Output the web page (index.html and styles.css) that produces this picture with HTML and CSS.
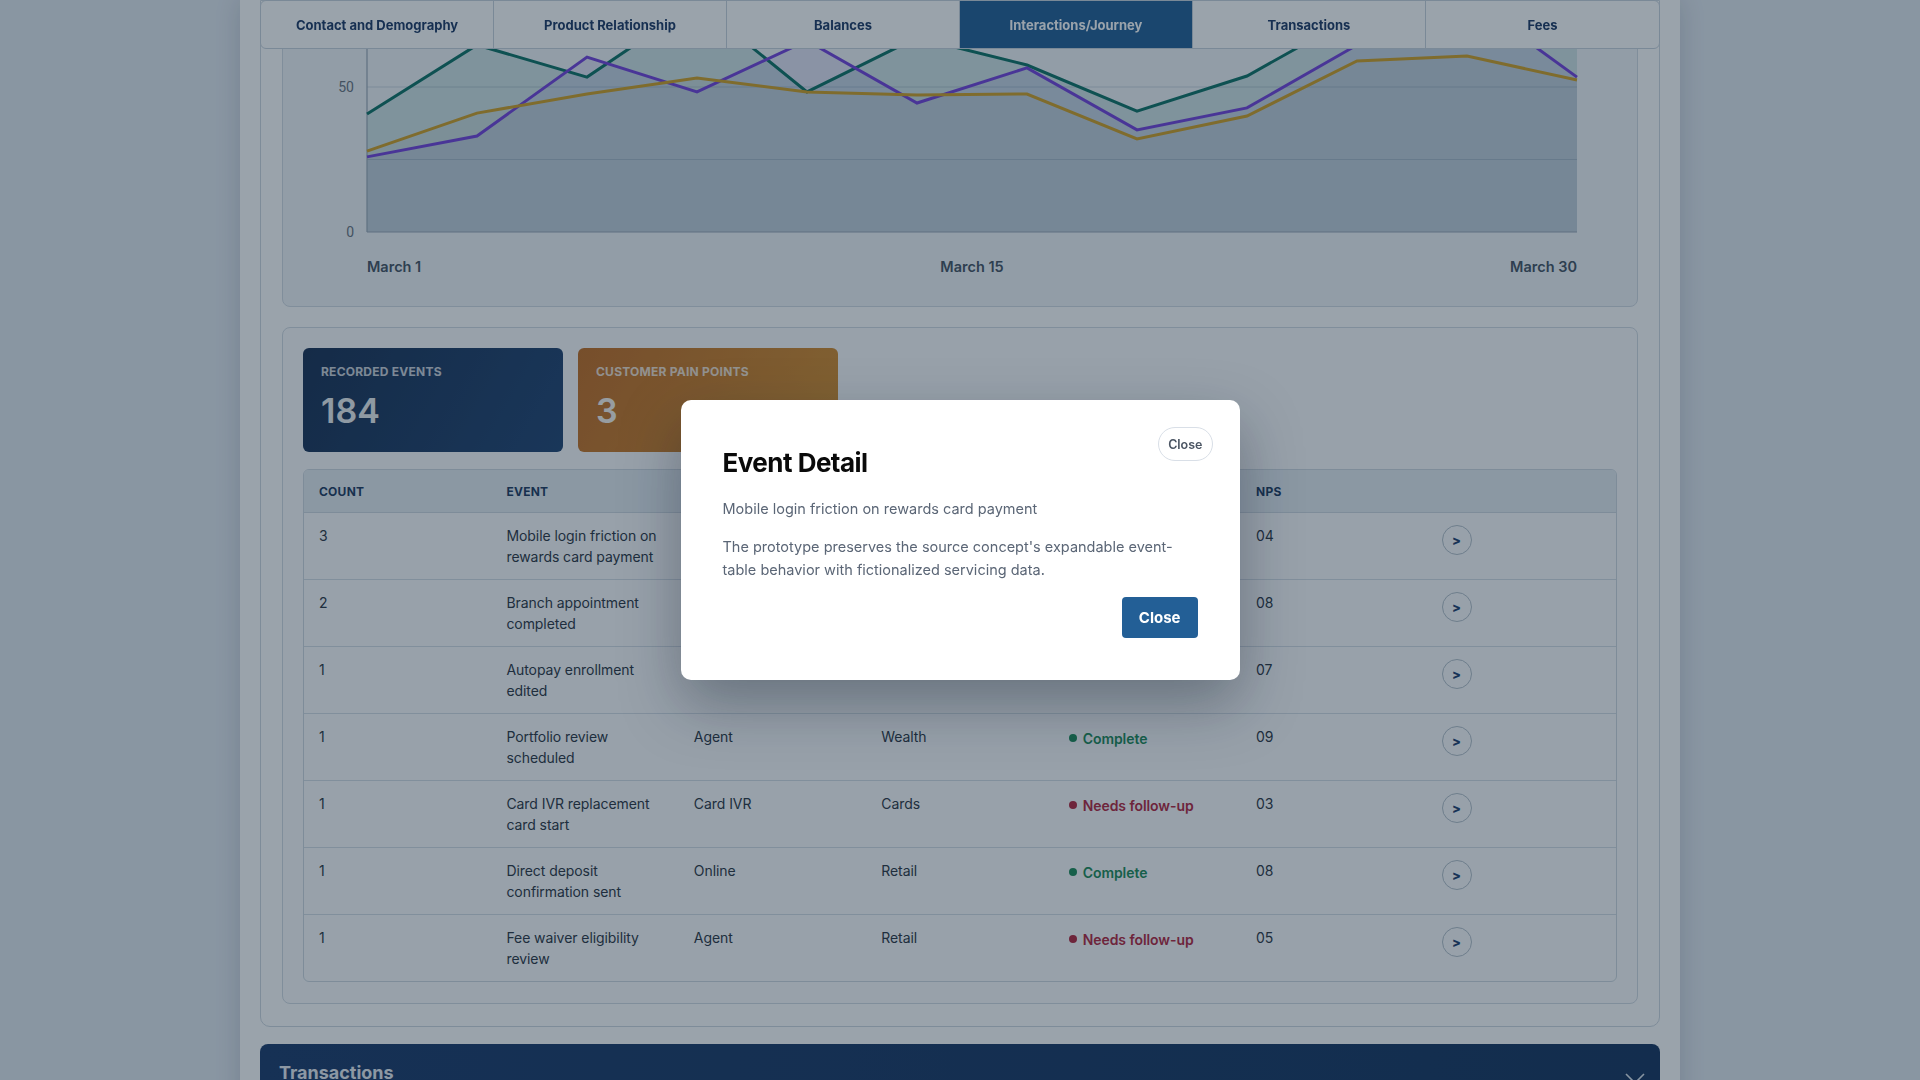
FILE: index.html
```html
<!DOCTYPE html>
<html lang="en">
<head>
<meta charset="utf-8">
<title>Customer Profile – Interactions/Journey</title>
<link rel="stylesheet" href="styles.css">
</head>
<body class="modal-open">
<main class="column">
  <nav class="tabs">
    <a class="tab">Contact and Demography</a>
    <a class="tab">Product Relationship</a>
    <a class="tab">Balances</a>
    <a class="tab tab-active">Interactions/Journey</a>
    <a class="tab">Transactions</a>
    <a class="tab">Fees</a>
  </nav>

  <section class="profile-card">
    <div class="chart-card">
      <svg class="chart" width="1353" height="282" viewBox="0 0 1353 282">
        <g class="grid">
          <line x1="84" y1="135.5" x2="1294" y2="135.5"/>
          <line x1="84" y1="63" x2="1294" y2="63"/>
          <line x1="84" y1="-9.5" x2="1294" y2="-9.5"/>
        </g>
        <polygon class="area-teal" points="84,90 194,21 304,53.1 414,-21.1 524,67.9 634,13.7 744,41 854,87.1 964,52 1074,-9.5 1184,-35.6 1294,-18.2 1294,208 84,208"/>
        <polygon class="area-purple" points="84,132.9 194,112 304,33.1 414,67.9 524,16.6 634,79 744,43.9 854,105.9 964,83.9 1074,21 1184,-26.9 1294,53.1 1294,208 84,208"/>
        <polygon class="area-gold" points="84,127.1 194,89.1 304,70 414,54 524,67.9 634,71.1 744,70 854,114.9 964,92 1074,36.9 1184,32 1294,56 1294,208 84,208"/>
        <line class="axis" x1="84" y1="0" x2="84" y2="208"/>
        <line class="axis" x1="84" y1="208" x2="1294" y2="208"/>
        <polyline class="line-teal" points="84,90 194,21 304,53.1 414,-21.1 524,67.9 634,13.7 744,41 854,87.1 964,52 1074,-9.5 1184,-35.6 1294,-18.2"/>
        <polyline class="line-purple" points="84,132.9 194,112 304,33.1 414,67.9 524,16.6 634,79 744,43.9 854,105.9 964,83.9 1074,21 1184,-26.9 1294,53.1"/>
        <polyline class="line-gold" points="84,127.1 194,89.1 304,70 414,54 524,67.9 634,71.1 744,70 854,114.9 964,92 1074,36.9 1184,32 1294,56"/>
        <text class="y-label" x="71" y="68">50</text>
        <text class="y-label" x="71" y="213">0</text>
        <text class="x-label" x="84" y="248">March 1</text>
        <text class="x-label x-mid" x="689" y="248">March 15</text>
        <text class="x-label x-end" x="1294" y="248">March 30</text>
      </svg>
    </div>

    <div class="events-card">
      <div class="stats">
        <div class="stat stat-navy">
          <div class="stat-label">Recorded Events</div>
          <div class="stat-value">184</div>
        </div>
        <div class="stat stat-amber">
          <div class="stat-label">Customer Pain Points</div>
          <div class="stat-value">3</div>
        </div>
      </div>

      <div class="table-wrap">
        <table class="events">
          <thead>
            <tr><th>Count</th><th>Event</th><th>Channel</th><th>Product</th><th>Status</th><th>NPS</th><th></th></tr>
          </thead>
          <tbody>
            <tr><td>3</td><td>Mobile login friction on rewards card payment</td><td>Mobile</td><td>Cards</td><td><span class="status status-bad">Needs follow-up</span></td><td>04</td><td class="action"><button class="expand">&gt;</button></td></tr>
            <tr><td>2</td><td>Branch appointment completed</td><td>Branch</td><td>Retail</td><td><span class="status status-ok">Complete</span></td><td>08</td><td class="action"><button class="expand">&gt;</button></td></tr>
            <tr><td>1</td><td>Autopay enrollment edited</td><td>Online</td><td>Cards</td><td><span class="status status-ok">Complete</span></td><td>07</td><td class="action"><button class="expand">&gt;</button></td></tr>
            <tr><td>1</td><td>Portfolio review scheduled</td><td>Agent</td><td>Wealth</td><td><span class="status status-ok">Complete</span></td><td>09</td><td class="action"><button class="expand">&gt;</button></td></tr>
            <tr><td>1</td><td>Card IVR replacement card start</td><td>Card IVR</td><td>Cards</td><td><span class="status status-bad">Needs follow-up</span></td><td>03</td><td class="action"><button class="expand">&gt;</button></td></tr>
            <tr><td>1</td><td>Direct deposit confirmation sent</td><td>Online</td><td>Retail</td><td><span class="status status-ok">Complete</span></td><td>08</td><td class="action"><button class="expand">&gt;</button></td></tr>
            <tr><td>1</td><td>Fee waiver eligibility review</td><td>Agent</td><td>Retail</td><td><span class="status status-bad">Needs follow-up</span></td><td>05</td><td class="action"><button class="expand">&gt;</button></td></tr>
          </tbody>
        </table>
      </div>
    </div>
  </section>

  <section class="collapse-bar">
    <h3 class="collapse-title">Transactions</h3>
    <svg class="chevron" width="20" height="12" viewBox="0 0 20 12"><polyline points="1,1 10,10 19,1"/></svg>
  </section>
</main>

<div class="overlay">
  <div class="modal" role="dialog">
    <button class="pill-close">Close</button>
    <h2 class="modal-title">Event Detail</h2>
    <p class="modal-sub">Mobile login friction on rewards card payment</p>
    <p class="modal-text">The prototype preserves the source concept's expandable event-table behavior with fictionalized servicing data.</p>
    <div class="modal-actions">
      <button class="btn-primary">Close</button>
    </div>
  </div>
</div>
</body>
</html>
```

FILE: styles.css
```css
* { box-sizing: border-box; }
html, body { margin: 0; height: 100%; }
body {
  background: #e2e8f0;
  font-family: Inter, "Noto Sans", sans-serif;
  color: #2b3442;
}
body.modal-open { overflow: hidden; }

.column {
  width: 1440px;
  min-height: 100vh;
  margin: 0 auto;
  padding: 0 20px;
  background: #ffffff;
  box-shadow: 0 0 24px rgba(15, 23, 42, 0.16);
}

/* sticky tab bar */
.tabs {
  position: fixed;
  top: 0;
  left: 50%;
  transform: translateX(-50%);
  width: 1400px;
  height: 49px;
  display: grid;
  grid-template-columns: repeat(6, 1fr);
  background: #ffffff;
  border: 1px solid #c9d3dd;
  border-radius: 6px;
  overflow: hidden;
  z-index: 5;
}
.tab {
  display: flex;
  align-items: center;
  justify-content: center;
  font-size: 13px;
  font-weight: 700;
  color: #1e3a66;
  border-right: 1px solid #c9d3dd;
}
.tab:last-child { border-right: none; }
.tab-active { background: #235f96; color: #ffffff; }

.profile-card {
  border: 1px solid #cfd8e1;
  border-radius: 0 0 10px 10px;
  padding: 22px 21px 22px;
  background: #ffffff;
}

.chart-card {
  border: 1px solid #d3dbe3;
  border-radius: 8px;
  background: #f1f5f9;
  overflow: hidden;
}
.chart { display: block; }
.grid line { stroke: #cdd6df; stroke-width: 1; }
.axis { stroke: #9aa8b6; stroke-width: 1.2; }
.area-teal { fill: #0f766e; fill-opacity: 0.14; }
.area-purple { fill: #5b3fd6; fill-opacity: 0.09; }
.area-gold { fill: #8a8f76; fill-opacity: 0.07; }
.line-teal, .line-purple, .line-gold { fill: none; stroke-width: 3; stroke-linejoin: miter; }
.line-teal { stroke: #0f7266; }
.line-purple { stroke: #7443dc; }
.line-gold { stroke: #d1a027; }
.y-label { font-family: Roboto, Inter, sans-serif; font-size: 14px; fill: #6b7480; text-anchor: end; }
.x-label { font-family: Inter, sans-serif; font-size: 14.5px; font-weight: 600; fill: #465363; }
.x-mid { text-anchor: middle; }
.x-end { text-anchor: end; }

.events-card {
  margin-top: 20px;
  border: 1px solid #d3dbe3;
  border-radius: 8px;
  background: #fbfcfd;
  padding: 20px 20px 21px;
}
.stats { display: flex; gap: 15px; }
.stat {
  width: 260px;
  height: 104px;
  border-radius: 6px;
  padding: 16px 18px;
  color: #ffffff;
}
.stat-navy { background: linear-gradient(120deg, #1a3154 0%, #224573 100%); }
.stat-amber { background: linear-gradient(120deg, #c26d24 0%, #d5902f 100%); }
.stat-label {
  font-size: 12px;
  line-height: 16px;
  font-weight: 700;
  text-transform: uppercase;
  letter-spacing: 0.02em;
  opacity: 0.78;
}
.stat-value {
  margin-top: 11px;
  font-size: 34px;
  line-height: 40px;
  font-weight: 600;
  opacity: 0.92;
}

.table-wrap {
  margin-top: 17px;
  border: 1px solid #cfd8e1;
  border-radius: 6px;
  overflow: hidden;
}
.events {
  width: 100%;
  table-layout: fixed;
  border-collapse: separate;
  border-spacing: 0;
  font-size: 14px;
}
.events th {
  height: 43px;
  padding: 0 15px;
  text-align: left;
  font-size: 12px;
  font-weight: 700;
  letter-spacing: 0.02em;
  text-transform: uppercase;
  color: #1e3a5f;
  background: #e5ecf2;
  border-bottom: 1px solid #cfd8e1;
}
.events td {
  padding: 12px 15px;
  line-height: 21px;
  vertical-align: top;
  color: #2d3644;
  letter-spacing: -0.005em;
  border-bottom: 1px solid #d5dde6;
}
.events td.action { padding-left: 13px; }
.events tbody tr:last-child td { border-bottom: none; }

.status { display: inline-flex; align-items: center; gap: 6px; font-weight: 600; }
.status::before {
  content: "";
  width: 8px;
  height: 8px;
  border-radius: 50%;
  background: currentColor;
}
.status-ok { color: #1d8a58; }
.status-bad { color: #b3263f; }

.expand {
  width: 30px;
  height: 30px;
  border-radius: 50%;
  border: 1px solid #b4bfca;
  background: transparent;
  color: #1e3f6e;
  font-family: Inter, sans-serif;
  font-size: 13px;
  font-weight: 800;
  line-height: 1;
  padding: 0;
}

.collapse-bar {
  margin-top: 17px;
  height: 90px;
  border-radius: 8px 8px 0 0;
  background: linear-gradient(90deg, #1c3b6b 0%, #17355f 100%);
  display: flex;
  align-items: flex-start;
  justify-content: space-between;
  padding: 18px 15px 0 19px;
}
.collapse-title {
  margin: 0;
  font-size: 18px;
  line-height: 22px;
  font-weight: 700;
  color: #e8edf3;
}
.chevron { margin-top: 11px; }
.chevron polyline { fill: none; stroke: #dfe6ee; stroke-width: 1.6; }

/* modal */
.overlay {
  position: fixed;
  inset: 0;
  background: rgba(15, 35, 55, 0.42);
  display: flex;
  align-items: center;
  justify-content: center;
  z-index: 10;
}
.modal {
  position: relative;
  width: 559px;
  background: #ffffff;
  border-radius: 10px;
  padding: 47px 42px 42px;
  box-shadow: 0 24px 60px rgba(15, 23, 42, 0.35);
}
.pill-close {
  position: absolute;
  top: 27px;
  right: 27px;
  height: 34px;
  padding: 0 9px;
  border: 1px solid #d9dfe7;
  border-radius: 999px;
  background: #ffffff;
  font-family: Inter, sans-serif;
  font-size: 12.5px;
  font-weight: 600;
  color: #4b5563;
}
.modal-title {
  margin: 0;
  font-size: 26px;
  line-height: 32px;
  font-weight: 700;
  letter-spacing: -0.02em;
  color: #0a0a0a;
}
.modal-sub {
  margin: 19px 0 0;
  font-size: 14.5px;
  line-height: 22px;
  color: #5b6676;
}
.modal-text {
  margin: 15px 0 0;
  font-size: 14.5px;
  line-height: 23px;
  color: #5b6676;
}
.modal-actions {
  margin-top: 16px;
  display: flex;
  justify-content: flex-end;
}
.btn-primary {
  height: 41px;
  padding: 0 17px;
  border: none;
  border-radius: 4px;
  background: #235f96;
  color: #ffffff;
  font-family: Inter, sans-serif;
  font-size: 15px;
  font-weight: 700;
}
```
